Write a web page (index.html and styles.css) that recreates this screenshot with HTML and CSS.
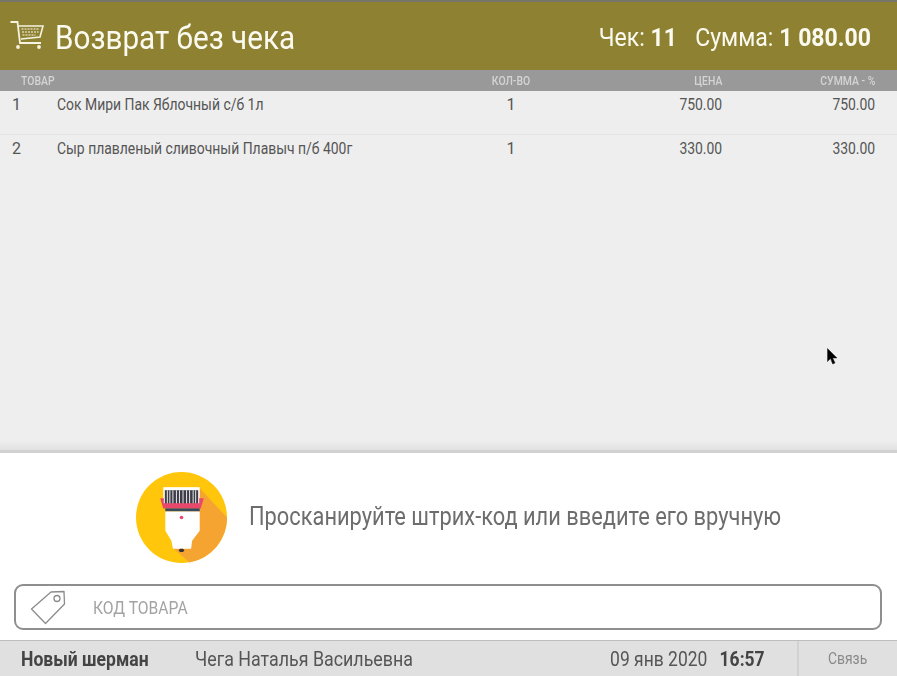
FILE: index.html
```html
<!DOCTYPE html>
<html lang="ru">
<head>
<meta charset="utf-8">
<title>Возврат без чека</title>
<link rel="stylesheet" href="styles.css">
</head>
<body>
<div class="app">
  <header class="header">
    <svg class="cart" viewBox="0 0 34 29" width="34" height="29" fill="none" stroke="#f5f3e2">
      <path d="M0.500 1h7l2.500 21h21" stroke-width="1.800"/>
      <path d="M8.500 5H33l-3 11-19 2" stroke-width="1.600"/>
      <path d="M11.500 8h18M12 11h16.500M12.500 14h13" stroke-width="1.800" stroke-dasharray="2 1" opacity=".55"/>
      <circle cx="8" cy="26" r="1.900" fill="#f5f3e2" stroke="none"/>
      <circle cx="29" cy="26" r="1.900" fill="#f5f3e2" stroke="none"/>
    </svg>
    <h1 class="title"><span class="squeeze">Возврат без чека</span></h1>
    <div class="totals">
      <span class="squeeze-right">Чек: <b>11</b><span class="gap"></span>Сумма: <b>1 080.00</b></span>
    </div>
  </header>
  <div class="thead">
    <span class="col-name th-name"><span class="squeeze">ТОВАР</span></span>
    <span class="col-qty"><span class="squeeze-mid">КОЛ-ВО</span></span>
    <span class="col-price"><span class="squeeze-right">ЦЕНА</span></span>
    <span class="col-sum"><span class="squeeze-right">СУММА - %</span></span>
  </div>
  <main class="tbody">
    <div class="row">
      <span class="col-num">1</span>
      <span class="col-name"><span class="squeeze">Сок Мири Пак Яблочный с/б 1л</span></span>
      <span class="col-qty">1</span>
      <span class="col-price"><span class="squeeze-right">750.00</span></span>
      <span class="col-sum"><span class="squeeze-right">750.00</span></span>
    </div>
    <div class="row">
      <span class="col-num">2</span>
      <span class="col-name"><span class="squeeze">Сыр плавленый сливочный Плавыч п/б 400г</span></span>
      <span class="col-qty">1</span>
      <span class="col-price"><span class="squeeze-right">330.00</span></span>
      <span class="col-sum"><span class="squeeze-right">330.00</span></span>
    </div>
    <svg class="pointer" viewBox="0 0 11 17" width="11" height="17">
      <path d="M0.500 0.500v13l3-3 2.200 5.500 2.300-1-2.300-5h4.300z" fill="#000" stroke="#222" stroke-width=".5"/>
    </svg>
  </main>
  <section class="scan">
    <div class="prompt">
      <svg class="scanner" viewBox="0 0 90 90" width="91" height="91">
        <circle cx="45" cy="45" r="45" fill="#ffc60b"/>
        <path d="M63 16 L90 45 A45 45 0 0 1 53 89.500 L36 75 L50 40z" fill="#f5a431"/>
        <rect x="27" y="15" width="36" height="19" fill="#fff"/>
        <rect x="28.500" y="18" width="33" height="15" fill="#3d3d4a"/>
        <path d="M31 18v15M33.500 18v15M36.500 18v15M40 18v15M43 18v15M46.500 18v15M50 18v15M53 18v15M56.500 18v15M59 18v15" stroke="#e4e4e4" stroke-width="1"/>
        <path d="M24 26h3.500v5h35v-5H67l-3 10H27z" fill="#e8486b"/>
        <rect x="29" y="36" width="34" height="3" fill="#3a4a63"/>
        <path d="M29 39h34v19l-7.500 10-1 8H36.500l-1.500-8-6-10z" fill="#fff"/>
        <circle cx="45" cy="45" r="1.800" fill="#e8486b"/>
        <rect x="42.500" y="76" width="5" height="3" rx="1.500" fill="#333"/>
      </svg>
      <p class="prompt-text"><span class="squeeze">Просканируйте штрих-код или введите его вручную</span></p>
    </div>
    <div class="field">
      <svg class="tag" viewBox="0 0 36 36" width="36" height="36" fill="none" stroke="#8c8c8c" stroke-width="1.300">
        <path d="M1.500 20 L21 3 L34 2.500 L34.500 15 L15.500 34.500z" stroke-linejoin="round"/>
        <circle cx="27" cy="9.500" r="3"/>
      </svg>
      <span class="placeholder"><span class="squeeze">КОД ТОВАРА</span></span>
    </div>
  </section>
  <footer class="footer">
    <span class="shop"><span class="squeeze">Новый шерман</span></span>
    <span class="cashier"><span class="squeeze">Чега Наталья Васильевна</span></span>
    <span class="datetime"><span class="squeeze-right">09 янв 2020<span class="gap-small"></span><b>16:57</b></span></span>
    <span class="link"><span class="squeeze-mid">Связь</span></span>
  </footer>
</div>
</body>
</html>
```
FILE: styles.css
```css
* { box-sizing: border-box; }
html, body { margin: 0; padding: 0; }
body { width: 897px; height: 676px; overflow: hidden; background: #fff; font-family: Roboto, "Liberation Sans", sans-serif; color: #555; }
.app { display: flex; flex-direction: column; height: 676px; filter: blur(.45px); }

.squeeze, .squeeze-right, .squeeze-mid { display: inline-block; white-space: nowrap; transform: scaleX(.87); }
.squeeze { transform-origin: left center; }
.squeeze-right { transform-origin: right center; }
.squeeze-mid { transform-origin: center center; }

.header { flex: none; height: 70px; border-top: 2px solid #77766a; background: #8e8232; color: #fbfaf0; display: flex; align-items: center; padding: 2px 26px 0 10px; }
.cart { flex: none; margin-right: 11px; margin-top: -4px; }
.title { flex: 1; margin: 0; font-size: 34.100px; font-weight: 400; line-height: 1; white-space: nowrap; }
.totals { font-size: 26.500px; white-space: nowrap; margin-top: -2px; }
.totals b { font-weight: 700; }
.gap { display: inline-block; width: 21px; }

.thead { flex: none; height: 21px; background: #999; color: #d4d4d4; font-size: 12px; font-weight: 500; display: flex; align-items: center; padding: 0 22px 0 0; }
.th-name { padding-left: 21px; }

.col-num { width: 57px; flex: none; padding-left: 12px; }
.col-name { flex: none; width: 414px; }
.th-name { width: 471px; }
.col-qty { flex: none; width: 80px; text-align: center; }
.col-price { flex: none; width: 171px; text-align: right; }
.col-sum { flex: none; width: 153px; text-align: right; }

.tbody { flex: none; height: 359px; background: linear-gradient(#eee 0, #eee 350px, #e2e2e2 359px); position: relative; color: #555; font-size: 16px; }
.row { height: 44px; display: flex; align-items: flex-start; padding: 5px 22px 0 0; line-height: 18px; border-bottom: 1px solid #e4e4e4; }
.row:last-of-type { border-bottom: 0; }
.pointer { position: absolute; left: 827px; top: 257px; }

.scan { flex: 1; display: flex; flex-direction: column; background: #fff; border-top: 3px solid #d2d2d2; padding: 19px 15px 10px 14px; }
.prompt { flex: 1; display: flex; align-items: flex-start; padding-left: 122px; }
.scanner { flex: none; }
.prompt-text { margin: 30px 0 0 22px; font-size: 25.100px; line-height: 30px; color: #6d6d6d; white-space: nowrap; }
.field { flex: none; height: 46px; width: 868px; border: 2px solid #8f8f8f; border-radius: 9px; display: flex; align-items: center; padding-left: 14px; }
.tag { flex: none; margin-right: 27px; }
.placeholder { font-size: 18px; color: #a3a3a3; padding-top: 1px; }

.footer { flex: none; height: 36px; background: #e0e0e0; border-top: 1px solid #bdbdbd; display: flex; align-items: center; font-size: 20.500px; color: #555; }
.shop { flex: none; width: 174px; padding-left: 21px; font-size: 20.200px; font-weight: 700; color: #444; }
.cashier { flex: none; width: 400px; padding-left: 21px; }
.datetime { flex: none; width: 223px; text-align: right; padding-right: 32px; font-size: 20.100px; }
.datetime b { font-weight: 700; color: #444; }
.gap-small { display: inline-block; width: 14px; }
.link { flex: none; width: 100px; height: 100%; border-left: 2px solid #d2d2d2; display: flex; align-items: center; justify-content: center; font-size: 16px; color: #8a8a8a; }
```
